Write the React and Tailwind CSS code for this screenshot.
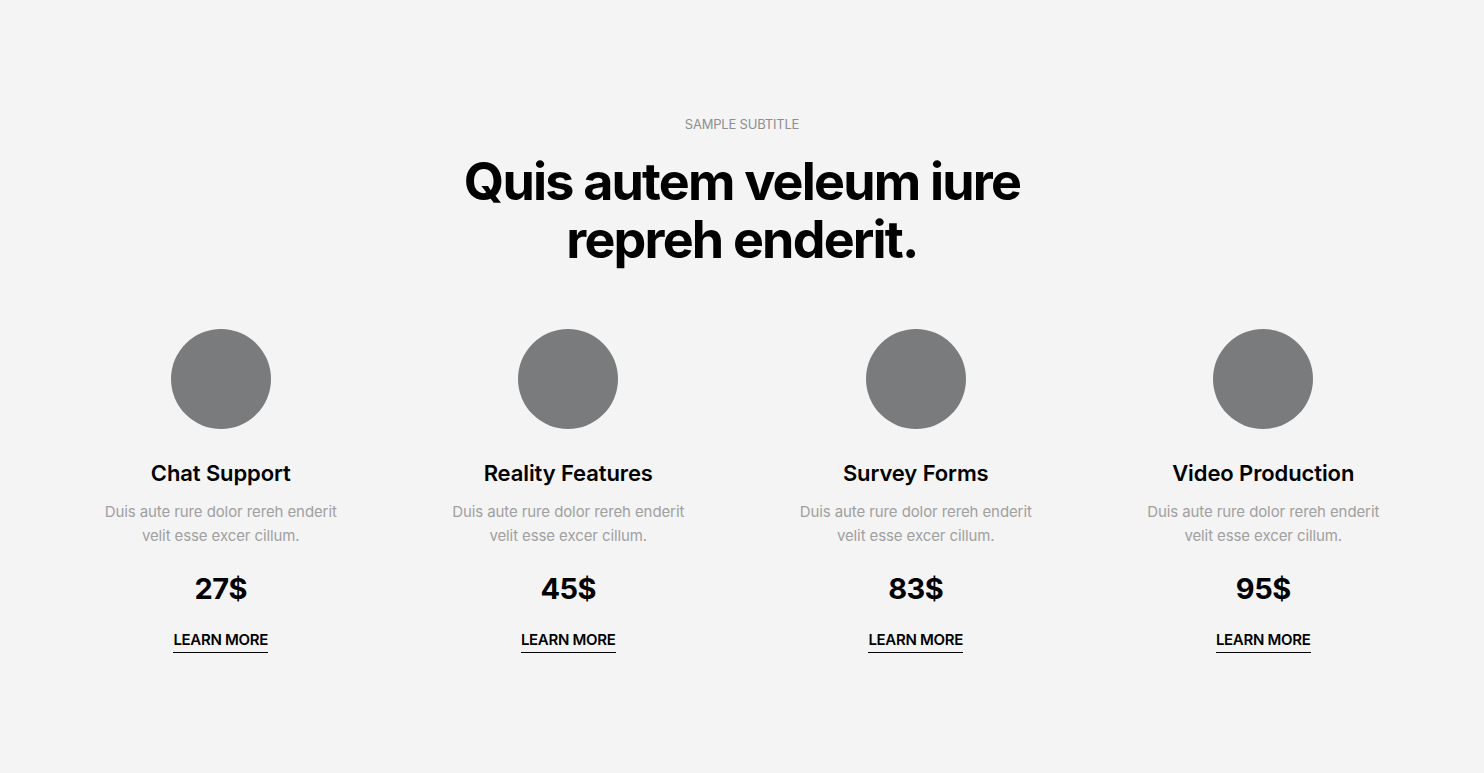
export default function App() {
  const items = [
    { title: "Chat Support", price: "27$" },
    { title: "Reality Features", price: "45$" },
    { title: "Survey Forms", price: "83$" },
    { title: "Video Production", price: "95$" },
  ];
  return (
    <div className="min-h-[773px] w-full bg-[#f4f4f4] font-['Inter',sans-serif] text-black">
      <div className="flex flex-col items-center pt-[116px]">
        <p className="text-[13px] leading-[16px] uppercase text-[#8f8f8f] tracking-[-0.2px]">Sample subtitle</p>
        <h1 className="mt-[21px] text-center text-[52px] leading-[58px] font-bold tracking-[-1.8px]">
          Quis autem veleum iure
          <br />
          repreh enderit.
        </h1>
      </div>
      <div className="mx-auto mt-[60px] grid w-[1390px] grid-cols-4">
        {items.map((it) => (
          <div key={it.title} className="flex flex-col items-center text-center">
            <div className="h-[100px] w-[100px] rounded-full bg-[#7a7b7c]" />
            <h3 className="mt-[30px] text-[22px] leading-[28px] font-semibold tracking-[-0.1px]">{it.title}</h3>
            <p className="mt-[13px] text-[15px] leading-[24px] text-[#a0a0a0] tracking-[-0.1px]">
              Duis aute rure dolor rereh enderit
              <br />
              velit esse excer cillum.
            </p>
            <div className="mt-[23px] text-[29px] leading-[36px] font-bold tracking-[-0.5px]">{it.price}</div>
            <a className="mt-[23px] border-b-[1.5px] border-black pb-[2px] text-[15px] leading-[20px] font-semibold uppercase tracking-[-0.3px]">
              Learn more
            </a>
          </div>
        ))}
      </div>
    </div>
  );
}
